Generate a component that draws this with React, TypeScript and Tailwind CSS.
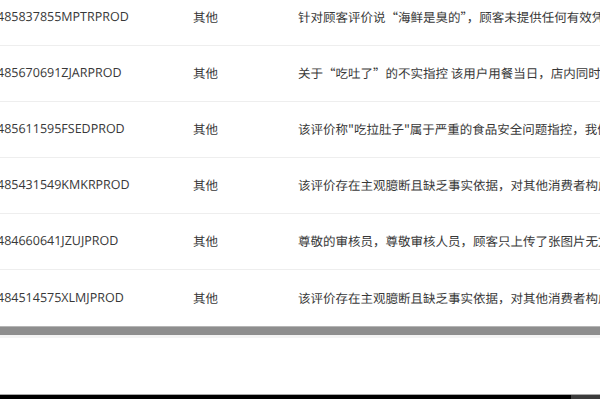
const rows = [
  {
    id: '485837855MPTRPROD',
    type: '其他',
    text: '针对顾客评价说“海鲜是臭的”，顾客未提供任何有效凭证，且当日同批次海鲜无其他投诉',
  },
  {
    id: '485670691ZJARPROD',
    type: '其他',
    text: '关于“吃吐了”的不实指控 该用户用餐当日，店内同时段用餐顾客均未反馈不适',
  },
  {
    id: '485611595FSEDPROD',
    type: '其他',
    text: '该评价称"吃拉肚子"属于严重的食品安全问题指控，我们对此高度重视并已自查',
  },
  {
    id: '485431549KMKRPROD',
    type: '其他',
    text: '该评价存在主观臆断且缺乏事实依据，对其他消费者构成误导，恳请平台核实',
  },
  {
    id: '484660641JZUJPROD',
    type: '其他',
    text: '尊敬的审核员，尊敬审核人员，顾客只上传了张图片无文字说明，无法判断真实情况',
  },
  {
    id: '484514575XLMJPROD',
    type: '其他',
    text: '该评价存在主观臆断且缺乏事实依据，对其他消费者构成误导，恳请平台核实',
  },
];

export default function App() {
  return (
    <div
      className="w-[600px] h-[399px] bg-white overflow-hidden flex flex-col text-[#383838] [text-rendering:geometricPrecision]"
      style={{ fontFamily: '"Open Sans", "Noto Sans CJK SC", sans-serif' }}
    >
      {/* 表格 */}
      <div className="-mt-[10px] -ml-[3px] w-[603px] overflow-hidden">
        {rows.map((r, i) => (
          <div
            key={r.id}
            className={`grid grid-cols-[196px_105px_1fr] items-center h-[56px] text-[12.5px] ${
              i < rows.length - 1 ? 'border-b border-[#eeeeee]' : ''
            }`}
          >
            <span className="whitespace-nowrap">{r.id}</span>
            <span className="whitespace-nowrap font-['Noto_Sans_CJK_SC',sans-serif]">{r.type}</span>
            <span className="whitespace-nowrap overflow-hidden font-['Noto_Sans_CJK_SC',sans-serif]">
              {r.text}
            </span>
          </div>
        ))}
      </div>

      {/* 横向滚动条 */}
      <div className="h-px bg-[#b5b5b5]" />
      <div className="h-[8px] bg-[#8e8e8e]" />
      <div className="h-[3px] bg-[#f4f4f4]" />

      <div className="flex-1" />

      {/* 底部 */}
      <div className="h-px bg-[#a8a8a8]" />
      <div className="h-[4px] flex">
        <div className="flex-1 bg-black" />
        <div className="w-[29px] bg-[#3c3c3c]" />
      </div>
    </div>
  );
}
